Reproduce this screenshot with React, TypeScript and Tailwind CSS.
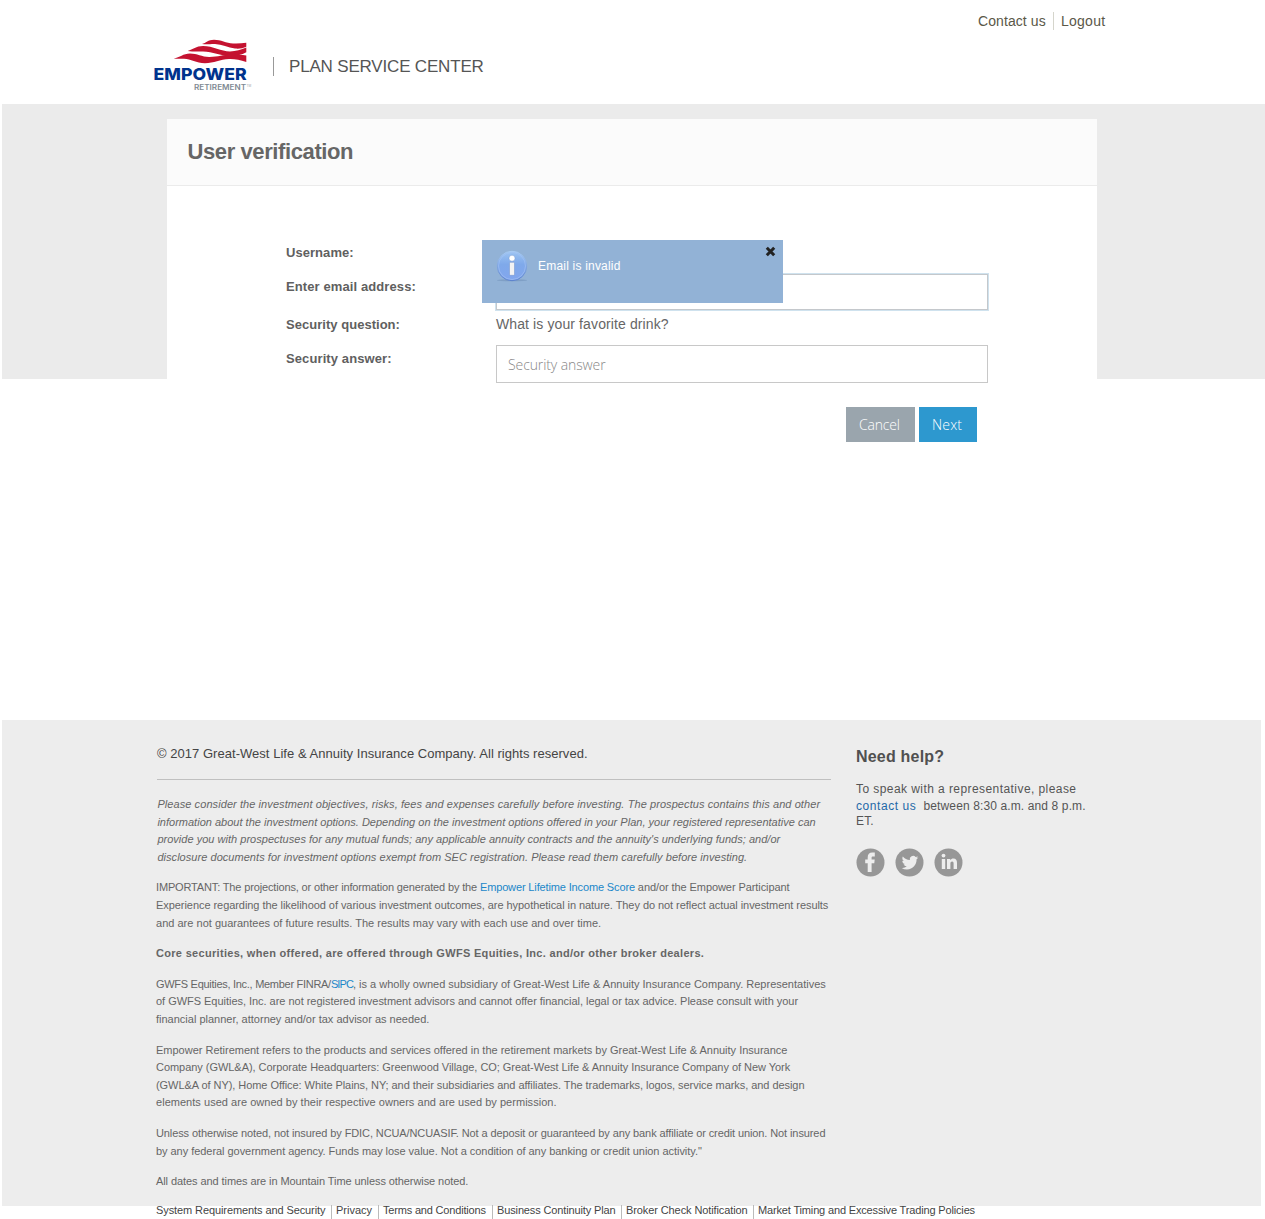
import type { ReactNode } from "react";

function Line({ children, className = "" }: { children: ReactNode; className?: string }) {
  return <span className={"block whitespace-nowrap " + className}>{children}</span>;
}

function Logo() {
  return (
    <svg width="100" height="54" viewBox="0 0 100 54" className="block overflow-visible" role="img" aria-label="Empower Retirement">
      <g fill="#c41230">
        <path d="M49 4 C53 3 55 -0.3 61 -0.300 C68 -0.300 73 3.200 80 3.500 C85 3.700 89 3.400 93.300 2.800 V6.700 C90 8.300 86 9 82 8.500 C75 7.500 69 4.300 62 4 C57 3.900 54 4.700 49 4 Z" />
        <path d="M34.700 10.900 C40 9.500 43 6 50 6 C60 6 68 11.400 77 11.400 C83 11.400 88 9.600 93.300 7.600 V12.200 C88 15 83 16.300 77 16 C67 15.600 60 11.700 50 11.500 C44 11.400 40 11.800 34.700 10.900 Z" />
        <path d="M20.700 18.600 C27 17.500 30 13.500 37 13.500 C44 13.500 49 16.900 56 17 C65 17.100 70 14.600 78 14.600 C84 14.600 89 15 93.300 15.500 V22 C87 20 82 18.800 76 19 C67 19.300 61 23.200 52 23.200 C43 23.200 38 19.100 31 18.800 C27 18.700 24 19 20.700 18.600 Z" />
      </g>
      <text x="0.600" y="40" fill="#00338d" className="font-['Inter'] text-[16.500px] font-extrabold" textLength="93" lengthAdjust="spacingAndGlyphs">EMPOWER</text>
      <text x="41" y="50" fill="#7f8a93" className="font-['Inter'] text-[7.500px] font-semibold" textLength="52" lengthAdjust="spacingAndGlyphs">RETIREMENT</text>
      <text x="93.500" y="47" fill="#9aa3aa" className="font-['Inter'] text-[3px]">TM</text>
    </svg>
  );
}

function InfoIcon() {
  return (
    <svg width="34" height="34" viewBox="0 0 34 34" className="block">
      <defs>
        <linearGradient id="ball" x1="0" y1="0" x2="0" y2="1">
          <stop offset="0" stopColor="#9cc4f2" />
          <stop offset=".45" stopColor="#7fa9ea" />
          <stop offset="1" stopColor="#82a6ee" />
        </linearGradient>
        <linearGradient id="ring" x1="0" y1="0" x2="0" y2="1">
          <stop offset="0" stopColor="#a9ccf4" />
          <stop offset="1" stopColor="#5a80ca" />
        </linearGradient>
      </defs>
      <ellipse cx="17" cy="30.300" rx="15" ry="1" fill="#6f8fb8" opacity=".55" />
      <circle cx="17" cy="16" r="14.700" fill="url(#ball)" stroke="url(#ring)" strokeWidth="1" />
      <circle cx="17" cy="16" r="13.500" fill="none" stroke="#a9c6f5" strokeWidth=".7" opacity=".8" />
      <circle cx="17" cy="8.200" r="3" fill="#fff" stroke="#6d8fc9" strokeWidth=".4" />
      <rect x="14.500" y="12.300" width="5" height="13" rx=".8" fill="#f3f3f3" stroke="#6d8fc9" strokeWidth=".5" />
    </svg>
  );
}

function Social({ children, label }: { children: ReactNode; label: string }) {
  return (
    <a aria-label={label}>
      <svg width="29" height="29" viewBox="0 0 29 29" className="block">
        <circle cx="14.500" cy="14.500" r="14" fill="#979797" />
        <g fill="#ededed">{children}</g>
      </svg>
    </a>
  );
}

const links = [
  { text: "System Requirements and Security", cls: "w-[175px] tracking-[-0.094px]" },
  { text: "Privacy", cls: "w-[42px]" },
  { text: "Terms and Conditions", cls: "w-[109px] tracking-[-0.18px]" },
  { text: "Business Continuity Plan", cls: "w-[124px] tracking-[-0.13px]" },
  { text: "Broker Check Notification", cls: "w-[127px] tracking-[-0.1px]" },
  { text: "Market Timing and Excessive Trading Policies", cls: "tracking-[-0.155px]" },
];

const label = "h-[18px] text-[13px] leading-[18px] font-bold text-[#606060]";

export default function App() {
  return (
    <div className="h-[1219px] w-[1265px] overflow-hidden bg-white font-['Liberation_Sans',Arial,sans-serif]">
      <header className="flex h-[104px] justify-between pl-[153px]">
        <div className="flex pt-10">
          <Logo />
          <div className="mt-[17px] ml-5 h-[19px] w-px bg-[#999]" />
          <span className="mt-[17px] ml-[15px] h-5 text-[17px] leading-5 tracking-[-0.18px] whitespace-nowrap text-[#555]">PLAN SERVICE CENTER</span>
        </div>
        <nav className="flex w-[287px] pt-3 text-[14px] leading-[18px] whitespace-nowrap text-[#5a5848]">
          <a className="w-[75px] tracking-[0.08px]">Contact us</a>
          <a className="h-[18px] border-l border-[#d5d5cc] pl-[7px] tracking-[0.25px]">Logout</a>
        </nav>
      </header>

      <div className="ml-[2px] h-[275px] bg-[#ebebeb] pt-[15px] pl-[165px]">
        <main className="h-[480px] w-[930px] bg-white">
          <h1 className="h-[67px] border-b border-[#ebebeb] bg-[#fbfbfb] pt-[19px] pl-[20.500px] text-[22px] leading-7 font-bold tracking-[-0.4px] text-[#666]">User verification</h1>
          <div className="relative flex pt-[58px] pl-[119px]">
            <div className="flex w-[210px] flex-col">
              <span className={label + " tracking-[0.05px]"}>Username:</span>
              <span className={label + " mt-4 tracking-[0.1px]"}>Enter email address:</span>
              <span className={label + " mt-5 tracking-[0.03px]"}>Security question:</span>
              <span className={label + " mt-4 tracking-[0.1px]"}>Security answer:</span>
            </div>
            <div className="flex w-[492px] flex-col pt-[30px]">
              <div className="h-[36px] border border-[#c4c8cc] shadow-[0_0_0_1px_#cfe2ee]" />
              <span className="mt-[5px] h-[18px] text-[14px] leading-[18px] tracking-[0.11px] text-[#666]">What is your favorite drink?</span>
              <div className="mt-[12px] h-[38px] border border-[#c8c8c8] pl-[11px] font-['Open_Sans'] text-[14px] leading-[38px] font-light tracking-[-0.1px] text-[#888]">Security answer</div>
              <div className="mt-6 flex justify-end gap-1 pr-[11px] font-['Open_Sans'] text-[14px] leading-[35px] font-light text-white">
                <button className="h-[35px] w-[69px] bg-[#9aa5ad] pl-[13px] text-left tracking-[-0.2px]">Cancel</button>
                <button className="h-[35px] w-[58px] bg-[#2d98cf] pl-[13px] text-left tracking-[0.2px]">Next</button>
              </div>
            </div>
            <div className="absolute top-[54px] left-[315px] flex h-[63px] w-[301px] bg-[#92b2d6] pt-[10px] pl-[13px]">
              <InfoIcon />
              <span className="mt-[7px] ml-[9px] text-[12px] leading-[18px] tracking-[0.2px] text-white">Email is invalid</span>
              <svg width="12" height="12" viewBox="0 0 12 12" className="absolute top-[6px] right-[7px]">
                <path d="M2.800 1.800 10.200 9.200 M10.200 1.800 2.800 9.200" stroke="#222" strokeWidth="3" />
              </svg>
            </div>
          </div>
        </main>
      </div>

      <footer className="mt-[341px] ml-[2px] flex h-[486px] w-[1259px] bg-[#ededed] pl-[154px]">
        <div className="w-[700px] text-[11px] leading-[17.6px] text-[#666]">
          <p className="ml-[1px] h-[60px] w-[674px] border-b border-[#c0c0c0] pt-[25px] text-[13px] leading-[18px] tracking-[0.033px] whitespace-nowrap text-[#444]">© 2017 Great-West Life &amp; Annuity Insurance Company. All rights reserved.</p>
          <p className="mt-[16px] mb-[13px] ml-[1.400px] italic">
            <Line className="tracking-[0.077px]">Please consider the investment objectives, risks, fees and expenses carefully before investing. The prospectus contains this and other</Line>
            <Line className="tracking-[0.007px]">information about the investment options. Depending on the investment options offered in your Plan, your registered representative can</Line>
            <Line className="tracking-[0.02px]">provide you with prospectuses for any mutual funds; any applicable annuity contracts and the annuity's underlying funds; and/or</Line>
            <Line className="tracking-[0.045px]">disclosure documents for investment options exempt from SEC registration. Please read them carefully before investing.</Line>
          </p>
          <p className="mb-[13px]">
            <Line className="tracking-[-0.15px]">IMPORTANT: The projections, or other information generated by the <a className="tracking-[-0.138px] text-[#1b87c9]">Empower Lifetime Income Score</a><span className="tracking-[-0.08px]"> and/or the Empower Participant</span></Line>
            <Line className="tracking-[-0.057px]">Experience regarding the likelihood of various investment outcomes, are hypothetical in nature. They do not reflect actual investment results</Line>
            <Line className="tracking-[0.016px]">and are not guarantees of future results. The results may vary with each use and over time.</Line>
          </p>
          <p className="mb-[13px] font-bold">
            <Line className="tracking-[0.308px]">Core securities, when offered, are offered through GWFS Equities, Inc. and/or other broker dealers.</Line>
          </p>
          <p className="mb-[13px]">
            <Line><span className="tracking-[-0.286px]">GWFS Equities, Inc., Member FINRA/</span><a className="tracking-[-0.9px] text-[#1b87c9]">SIPC</a>, is a wholly owned subsidiary of Great-West Life &amp; Annuity Insurance Company. Representatives</Line>
            <Line className="tracking-[-0.03px]">of GWFS Equities, Inc. are not registered investment advisors and cannot offer financial, legal or tax advice. Please consult with your</Line>
            <Line>financial planner, attorney and/or tax advisor as needed.</Line>
          </p>
          <p className="mb-[13px]">
            <Line className="tracking-[-0.008px]">Empower Retirement refers to the products and services offered in the retirement markets by Great-West Life &amp; Annuity Insurance</Line>
            <Line className="tracking-[-0.042px]">Company (GWL&amp;A), Corporate Headquarters: Greenwood Village, CO; Great-West Life &amp; Annuity Insurance Company of New York</Line>
            <Line className="tracking-[-0.056px]">(GWL&amp;A of NY), Home Office: White Plains, NY; and their subsidiaries and affiliates. The trademarks, logos, service marks, and design</Line>
            <Line className="tracking-[0.032px]">elements used are owned by their respective owners and are used by permission.</Line>
          </p>
          <p className="mb-[13px]">
            <Line className="tracking-[-0.102px]">Unless otherwise noted, not insured by FDIC, NCUA/NCUASIF. Not a deposit or guaranteed by any bank affiliate or credit union. Not insured</Line>
            <Line className="tracking-[-0.044px]">by any federal government agency. Funds may lose value. Not a condition of any banking or credit union activity."</Line>
          </p>
          <p><Line className="tracking-[-0.08px]">All dates and times are in Mountain Time unless otherwise noted.</Line></p>
          <nav className="mt-[14px] flex gap-[5px] leading-[12px] whitespace-nowrap text-[#444]">
            {links.map((l, i) => (
              <a key={l.text} className={l.cls + " h-[15px] shrink-0" + (i ? " border-l border-[#bbb] pl-[4px]" : " -mr-[5px]")}>
                <span className="-mt-px block">{l.text}</span>
              </a>
            ))}
          </nav>
        </div>
        <aside className="w-[240px] pt-[26px] text-[12px] whitespace-nowrap text-[#555]">
          <h2 className="h-[22px] text-[16px] leading-[22px] font-bold tracking-[0.2px] text-[#505050]">Need help?</h2>
          <p className="mt-[13px] tracking-[0.43px]">
            <Line className="leading-[17px]">To speak with a representative, please</Line>
            <Line className="leading-[17px]"><a className="tracking-[0.56px] text-[#1f69a8]">contact us</a>&nbsp;<span className="tracking-[0.12px]"> between 8:30 a.m. and 8 p.m.</span></Line>
            <Line className="h-[12px] leading-[13px] tracking-[0.15px]">ET.</Line>
          </p>
          <div className="mt-[21px] flex gap-[10px]">
            <Social label="Facebook">
              <path d="M11.700 24V15.300H9.200V11.600H11.700V9.500C11.700 6.200 13.300 4.500 16.300 4.500H18.800V8.400H17C15.900 8.400 15.600 8.900 15.600 9.800V11.600H18.700L18.300 15.300H15.600V24Z" />
            </Social>
            <Social label="Twitter">
              <path transform="translate(6.700 6.400) scale(.69)" d="M23.950 4.570a10 10 0 0 1-2.820.77 4.960 4.960 0 0 0 2.160-2.720c-.95.560-2 .960-3.130 1.180a4.920 4.920 0 0 0-8.380 4.480A13.930 13.930 0 0 1 1.640 3.160a4.820 4.820 0 0 0-.67 2.480c0 1.710.870 3.210 2.190 4.090a4.900 4.900 0 0 1-2.230-.61v.06a4.920 4.920 0 0 0 3.950 4.830 5 5 0 0 1-2.210.08 4.940 4.940 0 0 0 4.600 3.420A9.870 9.870 0 0 1 0 19.540a13.990 13.990 0 0 0 7.560 2.210c9.050 0 14-7.500 14-13.980 0-.21 0-.42-.02-.63a9.940 9.940 0 0 0 2.460-2.550z" />
            </Social>
            <Social label="LinkedIn">
              <circle cx="9.500" cy="7.600" r="1.900" />
              <path d="M7.800 10.900H11.200V20.900H7.800ZM13 10.900H16.200V12.200C17 11.100 18 10.600 19.400 10.600C22 10.600 23 12.200 23 14.900V20.900H19.600V15.400C19.600 14.100 19.200 13.400 18.200 13.400C17 13.400 16.400 14.200 16.400 15.600V20.900H13Z" />
            </Social>
          </div>
        </aside>
      </footer>
    </div>
  );
}
